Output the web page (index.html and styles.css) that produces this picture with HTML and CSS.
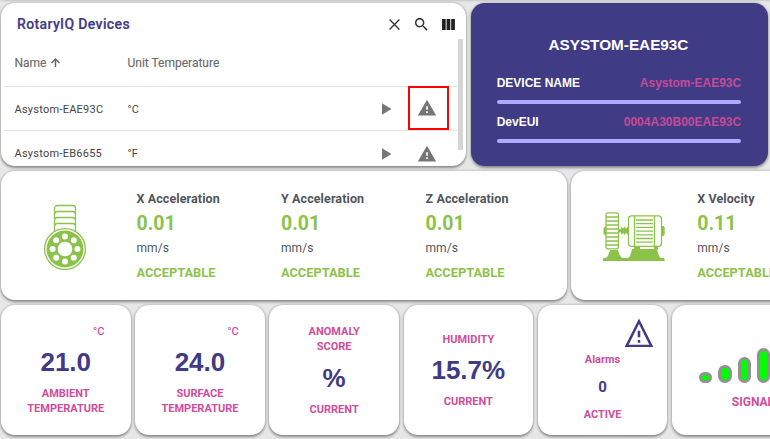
FILE: index.html
```
<!DOCTYPE html>
<html lang="en">
<head>
<meta charset="utf-8">
<title>RotaryIQ Devices</title>
<link rel="stylesheet" href="styles.css">
</head>
<body>
<svg class="defs" width="0" height="0" aria-hidden="true">
  <symbol id="warning" viewBox="0 0 24 24"><path d="M1 21h22L12 2 1 21zm12-3h-2v-2h2v2zm0-4h-2v-4h2v4z"/></symbol>
  <symbol id="play" viewBox="0 0 10 12"><path d="M0 0v12l10-6z"/></symbol>
</svg>
<main class="dashboard">
  <div class="row row-prev"><div class="card"></div></div>
  <div class="row row-top">
    <section class="card devices">
      <header class="devices-head">
        <h2>RotaryIQ Devices</h2>
        <svg class="ic ic-close" viewBox="0 0 10 10"><path d="M.5.5l9 9M9.500.5l-9 9"/></svg>
        <svg class="ic ic-search" viewBox="3 3 18 18"><path d="M15.500 14h-.79l-.28-.27C15.410 12.590 16 11.110 16 9.500 16 5.910 13.090 3 9.500 3S3 5.910 3 9.500 5.910 16 9.500 16c1.610 0 3.090-.59 4.230-1.570l.27.280v.79l5 4.990L20.490 19l-4.990-5zm-6 0C7.010 14 5 11.990 5 9.500S7.010 5 9.500 5 14 7.010 14 9.500 11.990 14 9.500 14z"/></svg>
        <svg class="ic ic-cols" viewBox="0 0 13 11"><path d="M0 0h3.700v11H0zM4.600 0h3.700v11H4.600zM9.200 0h3.700v11H9.200z"/></svg>
      </header>
      <div class="devices-body">
        <div class="line thead">
          <span class="c-name">Name <svg class="sort" viewBox="4 4 16 16"><path d="M4 12l1.800 1.800L10.700 8.800V20h2.600V8.800l4.900 5L20 12l-8-8-8 8z"/></svg></span>
          <span class="c-unit">Unit Temperature</span>
        </div>
        <div class="line first">
          <span class="c-name">Asystom-EAE93C</span><span class="c-unit">°C</span>
          <svg class="play"><use href="#play"/></svg>
          <span class="alert marked"><svg><use href="#warning"/></svg></span>
        </div>
        <div class="line">
          <span class="c-name">Asystom-EB6655</span><span class="c-unit">°F</span>
          <svg class="play"><use href="#play"/></svg>
          <span class="alert"><svg><use href="#warning"/></svg></span>
        </div>
      </div>
      <div class="scrollbar"></div>
    </section>
    <section class="card info">
      <h1>ASYSTOM-EAE93C</h1>
      <div class="info-line"><b>DEVICE NAME</b><span>Asystom-EAE93C</span></div>
      <div class="info-line"><b>DevEUI</b><span>0004A30B00EAE93C</span></div>
    </section>
  </div>
  <div class="row row-mid">
    <section class="card accel">
      <div class="pic">
        <svg width="44" height="66" viewBox="0 0 44 66">
          <g fill="none" stroke="#8bc34a" stroke-width="1.300">
            <path d="M11.500 27V4.500a3 3 0 0 1 3-3h15a3 3 0 0 1 3 3V27"/>
            <path d="M11.500 10a3 3 0 0 1 3-2.500h15a3 3 0 0 1 3 2.500M11.500 16a3 3 0 0 1 3-2.500h15a3 3 0 0 1 3 2.500M11.500 22a3 3 0 0 1 3-2.500h15a3 3 0 0 1 3 2.500"/>
          </g>
          <circle cx="22" cy="45" r="20.400" fill="#fff" stroke="#8bc34a" stroke-width="1.300"/>
          <circle cx="22" cy="45" r="18.500" fill="#8bc34a"/>
          <g fill="#fff"><circle cx="22" cy="45" r="7.300"/><circle cx="22" cy="32.600" r="3"/><circle cx="22" cy="57.400" r="3"/><circle cx="9.600" cy="45" r="3"/><circle cx="34.400" cy="45" r="3"/><circle cx="13.200" cy="36.200" r="3"/><circle cx="30.800" cy="36.200" r="3"/><circle cx="13.200" cy="53.800" r="3"/><circle cx="30.800" cy="53.800" r="3"/></g>
        </svg>
      </div>
      <div class="metric"><h3>X Acceleration</h3><strong>0.01</strong><span>mm/s</span><em>ACCEPTABLE</em></div>
      <div class="metric"><h3>Y Acceleration</h3><strong>0.01</strong><span>mm/s</span><em>ACCEPTABLE</em></div>
      <div class="metric"><h3>Z Acceleration</h3><strong>0.01</strong><span>mm/s</span><em>ACCEPTABLE</em></div>
    </section>
    <section class="card velocity">
      <div class="pic">
        <svg width="62" height="50" viewBox="0 0 62 50">
          <g fill="#8bc34a">
            <path d="M0 47q0-1 1-1h1.500q3-1 4.500-8h8q1.500 7 4.500 8h5.500q2.500-1 4-9H54q1.500 8 4 9h2.500q1 0 1 1v2H0z"/>
            <path d="M.5 16L3 14v10L.5 22zM58.500 14h2l1.200 1.500v7l-1.200 1.500h-2zM15.500 17.200h2.500V14.500l2 2 1.500-2 1.500 2 2.500-2v8.500l-2.500-2-1.500 2-1.500-2-2 2v-2.700h-2.500z"/>
            <path d="M31 34h6v3.500h-6zM51 34h4v3.500h-4z"/>
          </g>
          <g fill="#fff" stroke="#8bc34a" stroke-width="1.300">
            <rect x="3" y=".8" width="12.500" height="36" rx="2"/>
            <rect x="25.500" y="3.800" width="33" height="30.500" rx="3"/>
            <path d="M31.500 4v30M51.500 4v30"/>
            <path d="M3 5h12M3 9h12M3 13h12M3 17h12M3 21h12M3 25h12M3 29h12M3 33h12M33 8h17M33 11.700h17M33 15.400h17M33 19.100h17M33 22.800h17M33 26.500h17M33 30.200h17"/>
          </g>
        </svg>
      </div>
      <div class="metric"><h3>X Velocity</h3><strong>0.11</strong><span>mm/s</span><em>ACCEPTABLE</em></div>
    </section>
  </div>
  <div class="row row-tiles">
    <section class="card tile temp"><small>°C</small><strong>21.0</strong><p>AMBIENT<br>TEMPERATURE</p></section>
    <section class="card tile temp"><small>°C</small><strong>24.0</strong><p>SURFACE<br>TEMPERATURE</p></section>
    <section class="card tile anomaly"><p>ANOMALY<br>SCORE</p><strong>%</strong><p>CURRENT</p></section>
    <section class="card tile humidity"><p>HUMIDITY</p><strong>15.7%</strong><p>CURRENT</p></section>
    <section class="card tile alarms">
      <svg viewBox="0 0 28 28"><path d="M14 3L2.500 26h23z" fill="none" stroke="#3f3b84" stroke-width="2.300"/><path d="M12.800 12h2.400v6h-2.400zM12.800 20.500h2.400v2.500h-2.400z" fill="#3f3b84"/></svg>
      <p>Alarms</p><strong>0</strong><p>ACTIVE</p>
    </section>
    <section class="card tile signal">
      <div class="bars"><i class="b1"></i><i class="b2"></i><i class="b3"></i><i class="b4"></i></div>
      <p>SIGNAL</p>
    </section>
  </div>
</main>
</body>
</html>
```
FILE: styles.css
```
* { box-sizing: border-box; }
body { margin: 0; width: 770px; height: 439px; overflow: hidden; background: #e7e7e7; font-family: Roboto, sans-serif; }
h1, h2, h3, p { margin: 0; }
.defs { position: absolute; }
.dashboard { display: flex; flex-direction: column; gap: 5px; width: 770px; height: 451px; overflow: hidden; padding-left: 1px; margin-top: -12.500px; }
.row { display: flex; gap: 4.700px; flex: none; }
.card { background: #fff; border-radius: 14px; box-shadow: 0 1.500px 3px rgba(0,0,0,.38), 0 0 3px rgba(0,0,0,.16); flex: none; overflow: hidden; }
.row-prev { height: 10px; }
.row-prev .card { width: 800px; border-radius: 0; }
.row-top { height: 163px; }
.row-mid { height: 129.500px; }
.row-tiles { height: 129.500px; }

.devices { width: 465px; position: relative; padding: 0 4px 0 3px; }
.devices-head { display: flex; align-items: center; height: 37px; padding: 6px 7px 0 13px; }
h2 { font: 500 14px/20px Roboto, sans-serif; letter-spacing: .37px; color: #3f3b84; flex: 1; -webkit-text-stroke: .2px #3f3b84; }
.ic { flex: none; fill: #333; }
.ic-close { width: 11px; height: 11px; margin-right: 15.500px; fill: none; stroke: #333; stroke-width: 1.200; }
.ic-search { width: 13px; height: 13px; margin-right: 14px; }
.ic-cols { width: 13px; height: 11px; fill: #222; }
.line { display: flex; align-items: center; width: 453px; height: 44.500px; padding: 1.500px 0 0 10.500px; border-bottom: 1px solid #e2e2e2; font-size: 11px; letter-spacing: .25px; color: #444; }
.line.thead { height: 47px; align-items: flex-start; padding-top: 16px; font-size: 12px; letter-spacing: 0; color: #6c6c6c; -webkit-text-stroke: .15px #6c6c6c; }
.c-name { width: 113px; }
.c-unit { width: 254.500px; }
.sort { width: 9px; height: 9px; fill: #666; margin-left: 2px; }
.play { width: 9.500px; height: 12px; fill: #777; margin-right: 16.500px; }
.alert { display: grid; place-items: center; width: 41px; height: 44px; flex: none; }
.alert svg { width: 20px; height: 20px; fill: #757575; margin-right: 4px; }
.marked { border: 2px solid #f00; margin-top: -2px; }
.scrollbar { position: absolute; right: 3.500px; top: 36.500px; width: 5px; height: 111px; background: #d5d5d5; }

.info { width: 297.500px; background: #3f3b84; padding: 30px 27px 0 26px; font-family: "Liberation Sans", sans-serif; color: #fff; }
h1 { font-size: 15.300px; line-height: 24px; text-align: center; padding-right: 1px; }
.info-line { display: flex; justify-content: space-between; font-size: 12px; font-weight: 700; line-height: 14px; height: 38.500px; position: relative; }
h1 + .info-line { margin-top: 19.500px; }
.info-line span { color: #c74a98; }
.info-line::after { content: ""; position: absolute; left: 0; right: 0; top: 24px; height: 4px; border-radius: 2px; background: #aeaaff; }

.accel, .velocity { display: flex; padding-top: 19px; }
.accel { width: 565.500px; padding-left: 42px; }
.velocity { width: 400px; padding-left: 31.500px; }
.pic { flex: none; }
.accel .pic { width: 93.500px; padding-top: 14px; }
.velocity .pic { width: 94.500px; padding-top: 22px; }
.metric { display: flex; flex-direction: column; width: 144.500px; flex: none; color: #50555b; white-space: nowrap; }
h3 { font-size: 12.500px; line-height: 18px; font-weight: 700; letter-spacing: .1px; }
.metric strong { font-size: 19.500px; line-height: 30px; padding-top: 1px; margin-bottom: -1px; font-weight: 700; color: #8bc34a; }
.metric span { font-size: 12px; line-height: 20px; letter-spacing: .1px; }
.metric em { font-style: normal; font-size: 12.800px; line-height: 20px; margin-top: 5px; font-weight: 700; color: #8bc34a; }

.tile { width: 129.500px; display: flex; flex-direction: column; align-items: center; text-align: center; color: #cf4d9c; }
.tile p { font-size: 11px; line-height: 15.400px; font-weight: 700; }
.tile strong { font: 700 26px/36px "Liberation Sans", sans-serif; color: #3f3b84; }
.temp { padding-top: 18.500px; }
.temp small { align-self: flex-end; margin-right: 26px; font-size: 11px; line-height: 16px; font-weight: 500; }
.temp strong { margin: 4px 0 6.500px; }
.anomaly { padding-top: 18.500px; }
.anomaly strong { margin: 6px 0 5.500px; }
.humidity { padding-top: 26.500px; }
.humidity strong { margin: 5.500px 0 5.500px; }
.alarms { padding-top: 13px; }
.alarms svg { width: 30px; height: 30px; align-self: flex-end; margin-right: 13px; }
.alarms p { margin-top: 4px; }
.alarms strong { font: 700 15px/20px Roboto, sans-serif; margin: 9.500px 0 6px; }
.signal { width: 162px; padding-top: 43px; }
.bars { display: flex; align-items: flex-end; gap: 6px; height: 35px; align-self: flex-start; margin-left: 27px; }
.bars i { flex: none; width: 13.300px; border: 3px solid #929292; border-radius: 7px; background: #0f0; }
.b1 { height: 11px; }
.b2 { height: 18px; }
.b3 { height: 26px; }
.b4 { height: 35px; }
.signal p { margin-top: 12px; font-size: 12px; }
```
